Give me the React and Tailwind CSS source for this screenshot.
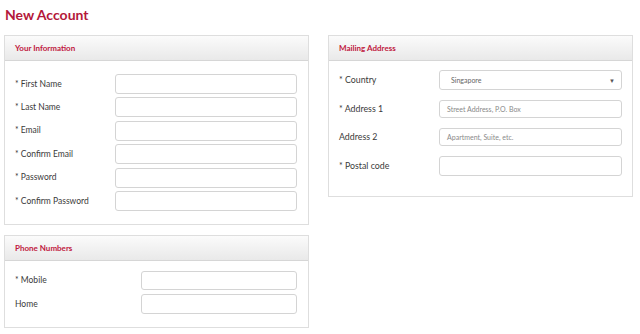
import React from "react";

const font = { fontFamily: "Lato, 'Open Sans', sans-serif" };

function Panel({ title, children, className = "" }) {
  return (
    <div className={"border border-[#dedede] bg-white " + className}>
      <div className="h-[25px] flex items-center px-[10px] bg-gradient-to-b from-[#fbfbfb] to-[#e9e9e9] border-b border-[#d6d6d6]">
        <span className="text-[8px] font-bold text-[#c0183e]">{title}</span>
      </div>
      {children}
    </div>
  );
}

function Input({ placeholder, className = "" }) {
  return (
    <div className={"flex items-center border border-[#d4d4d4] rounded-[3px] bg-white px-[7px] " + className}>
      {placeholder && <span className="text-[7px] text-[#8a8a8a]">{placeholder}</span>}
    </div>
  );
}

export default function App() {
  const left = ["* First Name", "* Last Name", "* Email", "* Confirm Email", "* Password", "* Confirm Password"];
  return (
    <div style={font} className="w-[640px] h-[334px] bg-white relative text-[#3a3a3a]">
      <div className="pl-[5px] pt-[3px] h-[35px]">
        <h1 className="text-[14px] font-bold text-[#b4183a] leading-[24px]">New Account</h1>
      </div>
      <div className="flex pl-[4px] gap-[19px]">
        <div className="w-[305px] flex flex-col gap-[10px]">
          <Panel title="Your Information">
            <div className="px-[10px] pt-[13px] pb-[13px] flex flex-col gap-[3.4px]">
              {left.map((l) => (
                <div key={l} className="flex items-center h-[20px]">
                  <span className="w-[100px] text-[8.5px] text-[#3a3a3a]">{l}</span>
                  <Input className="h-[20px] w-[182px]" />
                </div>
              ))}
            </div>
          </Panel>
          <Panel title="Phone Numbers">
            <div className="px-[10px] pt-[10px] pb-[13px] flex flex-col gap-[4px]">
              {["* Mobile", "Home"].map((l) => (
                <div key={l} className="flex items-center h-[19.5px]">
                  <span className="w-[126px] text-[8.5px] text-[#3a3a3a]">{l}</span>
                  <Input className="h-[19.5px] w-[156px]" />
                </div>
              ))}
            </div>
          </Panel>
        </div>
        <div className="w-[305px]">
          <Panel title="Mailing Address">
            <div className="px-[10px] pt-[9px] pb-[20px] flex flex-col">
              <div className="flex items-center h-[20px]">
                <span className="w-[100px] text-[8.8px] text-[#3a3a3a]">* Country</span>
                <div className="h-[20px] w-[183px] border border-[#d4d4d4] rounded-[3px] flex items-center justify-between pl-[11px] pr-[6px]">
                  <span className="text-[7px] text-[#666]">Singapore</span>
                  <span className="text-[6px] text-[#555]">▼</span>
                </div>
              </div>
              <div className="flex items-center h-[18px] mt-[10px]">
                <span className="w-[100px] text-[8.8px] text-[#3a3a3a]">* Address 1</span>
                <Input className="h-[18px] w-[183px]" placeholder="Street Address, P.O. Box" />
              </div>
              <div className="flex items-center h-[18px] mt-[10px]">
                <span className="w-[100px] text-[8.8px] text-[#3a3a3a]">Address 2</span>
                <Input className="h-[18px] w-[183px]" placeholder="Apartment, Suite, etc." />
              </div>
              <div className="flex items-center h-[19.5px] mt-[10px]">
                <span className="w-[100px] text-[8.8px] text-[#3a3a3a]">* Postal code</span>
                <Input className="h-[19.5px] w-[183px]" />
              </div>
            </div>
          </Panel>
        </div>
      </div>
    </div>
  );
}
